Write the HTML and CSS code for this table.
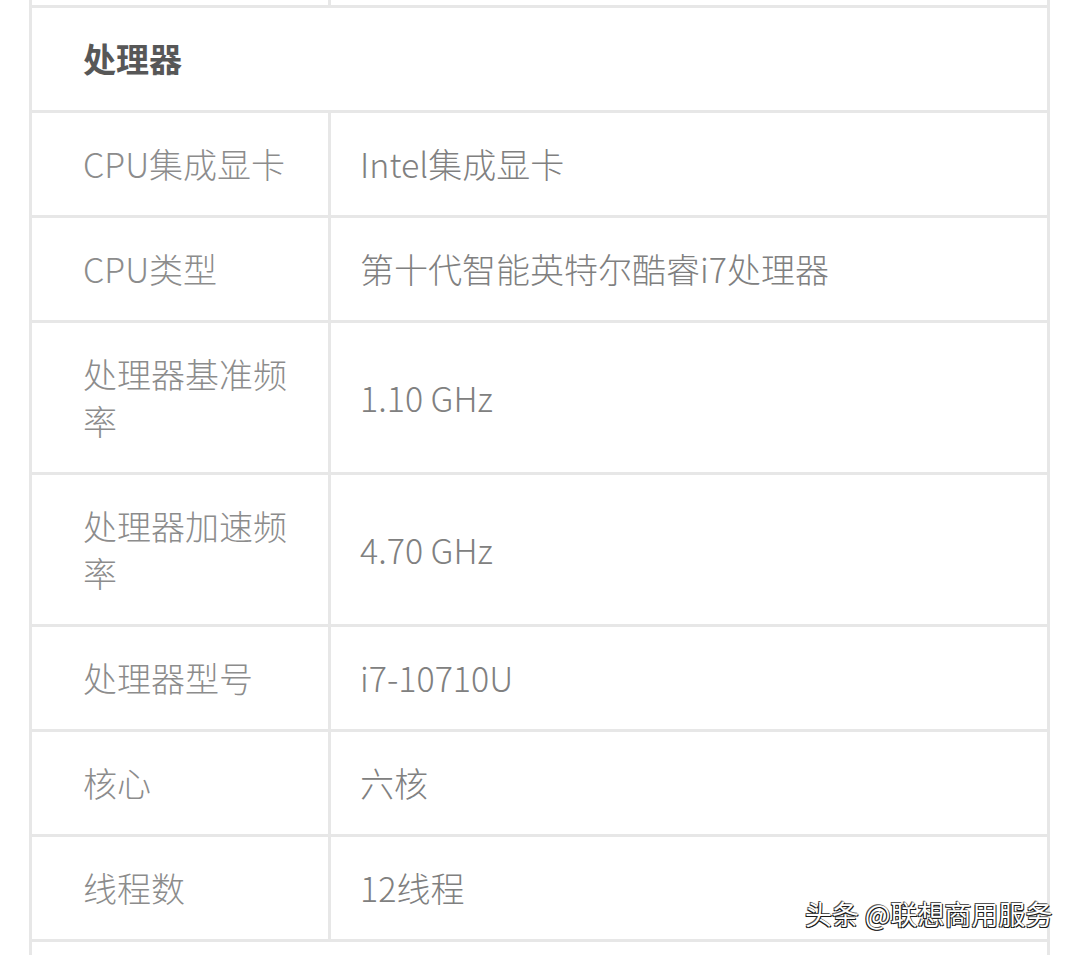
FILE: index.html
```html
<!DOCTYPE html>
<html lang="zh-CN">
<head>
<meta charset="utf-8">
<title>处理器</title>
<link rel="stylesheet" href="styles.css">
</head>
<body>
<div class="page">
  <div class="spec">
    <div class="cell label"></div>
    <div class="cell value"></div>

    <div class="cell head">处理器</div>

    <div class="cell label">CPU集成显卡</div>
    <div class="cell value">Intel集成显卡</div>

    <div class="cell label">CPU类型</div>
    <div class="cell value">第十代智能英特尔酷睿i7处理器</div>

    <div class="cell label">处理器基准频率</div>
    <div class="cell value">1.10 GHz</div>

    <div class="cell label">处理器加速频率</div>
    <div class="cell value">4.70 GHz</div>

    <div class="cell label">处理器型号</div>
    <div class="cell value">i7-10710U</div>

    <div class="cell label">核心</div>
    <div class="cell value">六核</div>

    <div class="cell label">线程数</div>
    <div class="cell value">12线程</div>

    <div class="cell tail"></div>
  </div>
  <div class="watermark">头条 @联想商用服务</div>
</div>
</body>
</html>
```
FILE: styles.css
```css
html, body {
  margin: 0;
  padding: 0;
  background: #ffffff;
  overflow: hidden;
}

body {
  width: 1080px;
  height: 955px;
  font-family: "Noto Sans CJK SC", "Noto Sans", sans-serif;
}

.page {
  position: relative;
  width: 1080px;
  height: 955px;
  overflow: hidden;
  padding-left: 29px;
  box-sizing: border-box;
}

.spec {
  margin-top: -100px;
  width: 1021px;
  box-sizing: border-box;
  display: grid;
  grid-template-columns: 296px 716px;
  gap: 3px;
  padding: 3px;
  background: #e7e7e7;
}

.cell {
  display: flex;
  align-items: center;
  background: #ffffff;
  font-size: 34px;
  font-weight: 300;
  line-height: 47px;
  min-height: 47px;
  padding: 27px 30px 28px 29px;
  color: #858585;
}

.label {
  padding-left: 51px;
  color: #8c8c8c;
}

.value {
  color: #808080;
}

.head {
  grid-column: 1 / span 2;
  padding-left: 51px;
  font-size: 33px;
  font-weight: 700;
  color: #575757;
}

.tail {
  grid-column: 1 / span 2;
  min-height: 120px;
}

.watermark {
  position: absolute;
  left: 805px;
  top: 896px;
  font-size: 27px;
  line-height: 36px;
  color: #ffffff;
  white-space: nowrap;
  text-shadow: -1px 1px 0 #1a1a1a, 1px 1px 0 #1a1a1a, -1px -1px 0 #555, 0 0 1px #000;
}
```
